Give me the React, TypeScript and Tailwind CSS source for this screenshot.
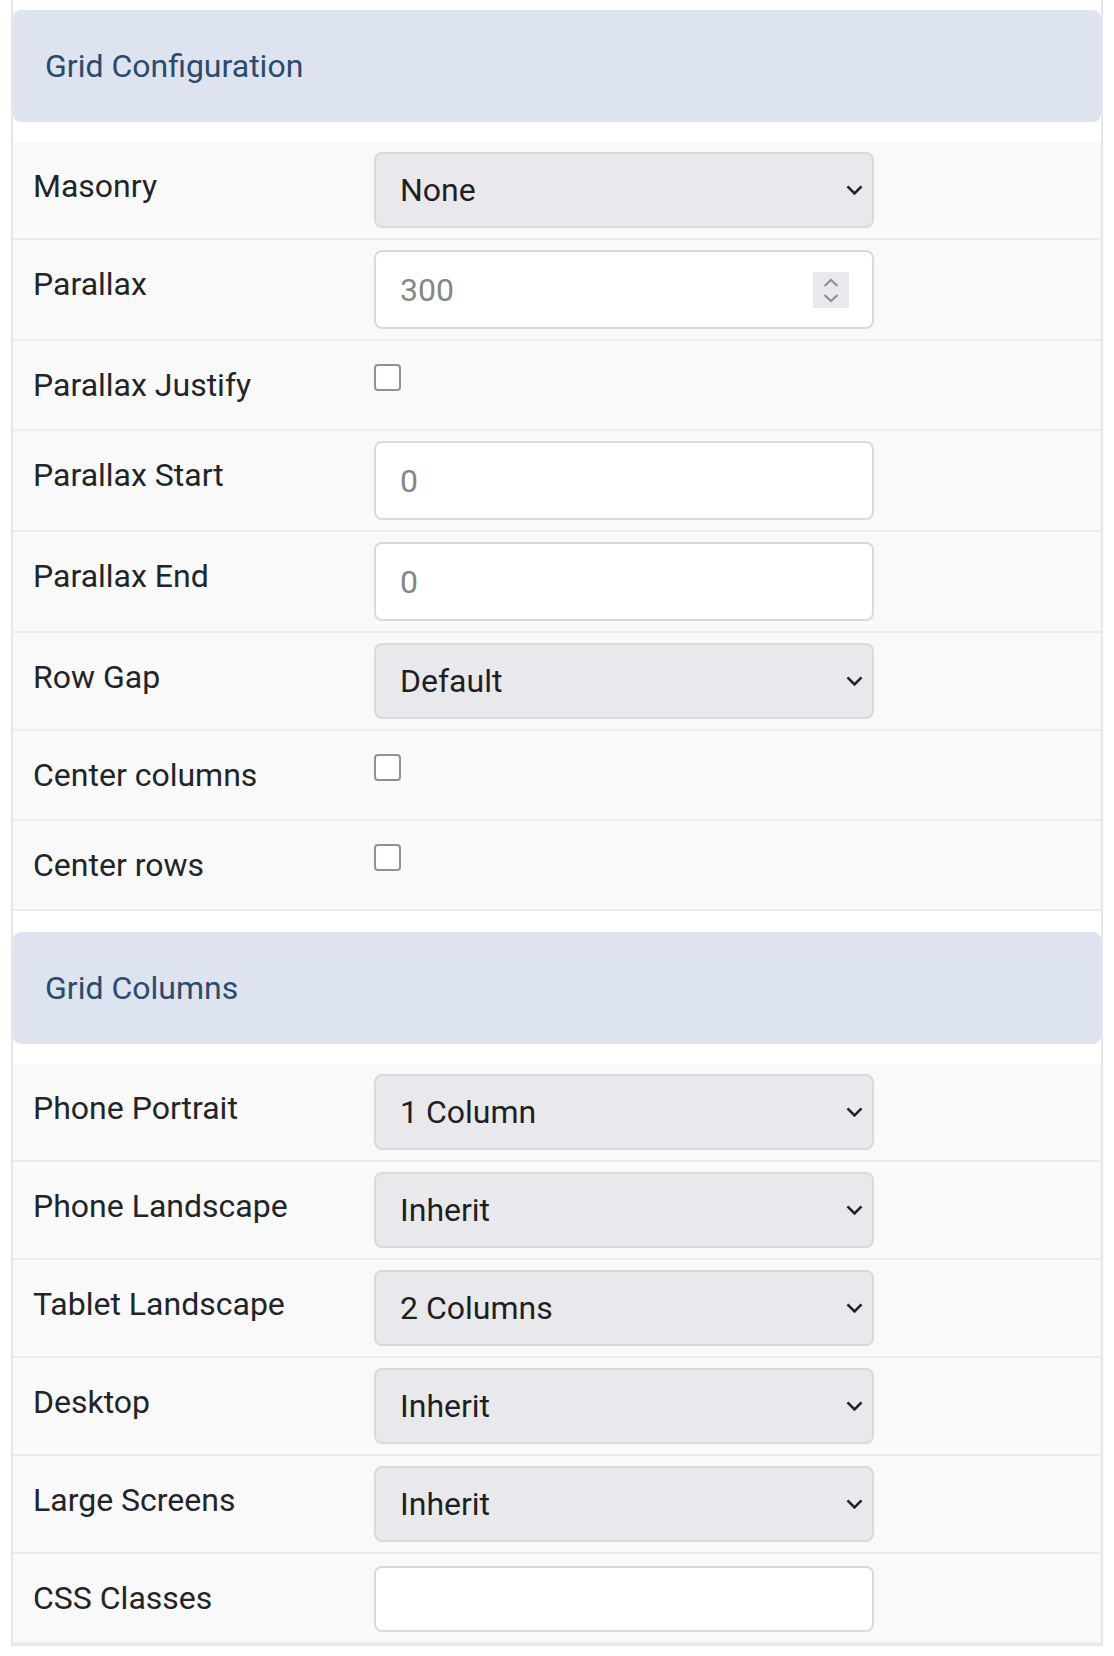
import React from "react";

// settings panel: grid configuration + grid columns
const field =
  "w-full appearance-none rounded-[8px] border-2 border-[#dadada] pl-[24px] text-[32px] outline-none font-['Roboto',sans-serif]";

function Chevron() {
  return (
    <svg
      className="pointer-events-none absolute right-[11px] top-1/2 -translate-y-1/2"
      width="17"
      height="11"
      viewBox="0 0 17 11"
      fill="none"
    >
      <path d="M1.5 1.8 L8.5 8.8 L15.5 1.8" stroke="#222" strokeWidth="2.6" />
    </svg>
  );
}

function Select({ value }: { value: string }) {
  return (
    <div className="relative w-[500px]">
      <select
        defaultValue={value}
        className={`${field} h-[76px] bg-[#e9e9ed] text-[#1f1f1f]`}
      >
        <option>{value}</option>
      </select>
      <Chevron />
    </div>
  );
}

function NumberInput({ value, spinner }: { value: string; spinner?: boolean }) {
  return (
    <div className="relative w-[500px]">
      <input
        type="text"
        readOnly
        value={value}
        className={`${field} h-[79px] bg-white text-[#868686]`}
      />
      {spinner && (
        <div className="pointer-events-none absolute right-[25px] top-1/2 h-[36px] w-[36px] -translate-y-1/2 bg-[#e9e9ed]">
          <svg width="36" height="36" viewBox="0 0 36 36" fill="none">
            <path d="M11.5 14 L18 8 L24.5 14" stroke="#8e8e9a" strokeWidth="2.2" />
            <path d="M11.5 23 L18 29 L24.5 23" stroke="#8e8e9a" strokeWidth="2.2" />
          </svg>
        </div>
      )}
    </div>
  );
}

function Checkbox() {
  return (
    <input
      type="checkbox"
      className="mt-[13px] block h-[27px] w-[27px] appearance-none rounded-[4px] border-2 border-[#8f8f9d] bg-white"
    />
  );
}

function Row({ label, children }: { label: string; children: React.ReactNode }) {
  return (
    <div className="flex items-start border-b-2 border-[#ececec] bg-[#f9f9f9] py-[10px] pl-[20px]">
      <div className="w-[341px] shrink-0 pb-[10px] pt-[11px] text-[32px] leading-[47px] text-[#212529]">
        {label}
      </div>
      <div>{children}</div>
    </div>
  );
}

function Header({ title }: { title: string }) {
  return (
    <div className="flex h-[112px] items-center rounded-[8px] bg-[#dde4f0] pl-[32px] text-[32px] text-[#2c4a6e]">
      {title}
    </div>
  );
}

export default function App() {
  return (
    <div className="min-h-screen bg-white font-['Roboto',sans-serif]">
      <div className="mx-[11px] border-x-2 border-b-2 border-[#e6e6e6] bg-white pt-[10px]">
        <Header title="Grid Configuration" />

        <div className="mt-[20px]">
          <Row label="Masonry">
            <Select value="None" />
          </Row>
          <Row label="Parallax">
            <NumberInput value="300" spinner />
          </Row>
          <Row label="Parallax Justify">
            <Checkbox />
          </Row>
          <Row label="Parallax Start">
            <NumberInput value="0" />
          </Row>
          <Row label="Parallax End">
            <NumberInput value="0" />
          </Row>
          <Row label="Row Gap">
            <Select value="Default" />
          </Row>
          <Row label="Center columns">
            <Checkbox />
          </Row>
          <Row label="Center rows">
            <Checkbox />
          </Row>
        </div>

        <div className="mt-[21px]">
          <Header title="Grid Columns" />
        </div>

        <div className="mt-[20px]">
          <Row label="Phone Portrait">
            <Select value="1 Column" />
          </Row>
          <Row label="Phone Landscape">
            <Select value="Inherit" />
          </Row>
          <Row label="Tablet Landscape">
            <Select value="2 Columns" />
          </Row>
          <Row label="Desktop">
            <Select value="Inherit" />
          </Row>
          <Row label="Large Screens">
            <Select value="Inherit" />
          </Row>
          <Row label="CSS Classes">
            <div className="mt-[2px] w-[500px]">
              <input
                type="text"
                readOnly
                value=""
                className={`${field} block h-[66px] bg-white text-[#212529]`}
              />
            </div>
          </Row>
        </div>
      </div>
    </div>
  );
}
